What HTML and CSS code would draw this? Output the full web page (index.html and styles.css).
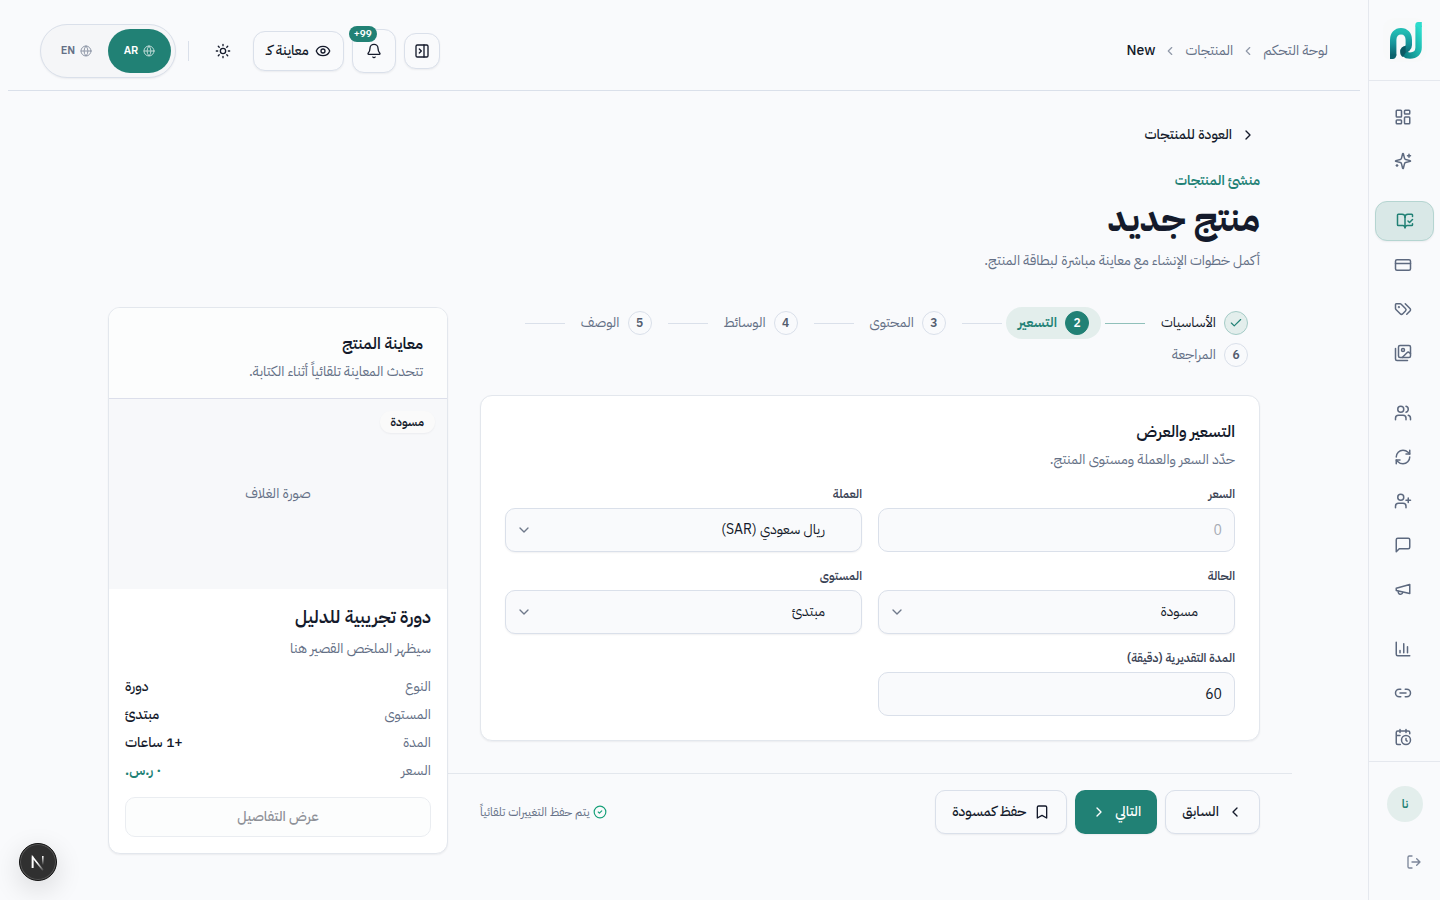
FILE: index.html
```html
<!DOCTYPE html>
<html lang="ar" dir="rtl">
<head>
<meta charset="utf-8">
<meta name="viewport" content="width=device-width, initial-scale=1">
<title>منتج جديد</title>
<link rel="stylesheet" href="styles.css">
</head>
<body>
<div class="app">
  <aside class="sidebar">
    <a class="brand" href="#" aria-label="الرئيسية">
      <svg class="brand-logo" viewBox="0 0 44 44" fill="none" stroke-width="6.400" aria-hidden="true">
        <defs>
          <linearGradient id="lg1" x1="0" y1="0" x2="0" y2="1"><stop offset="0" stop-color="#22bdb4"/><stop offset=".5" stop-color="#17949a"/><stop offset="1" stop-color="#0b626c"/></linearGradient>
          <linearGradient id="lg2" x1="0" y1="1" x2="1" y2="0"><stop offset="0" stop-color="#0a7a80"/><stop offset=".45" stop-color="#18aaa4"/><stop offset="1" stop-color="#2edccd"/></linearGradient>
        </defs>
        <rect width="44" height="44" rx="12" fill="#f8f9fa"/>
        <path d="M20.500 31.500C20.500 35.800 23 37.600 27 37.600C32.500 37.600 35.600 34.500 35.600 29.500V7.500" stroke="url(#lg2)"/>
        <path d="M32.400 8.500V6.500C32.400 5 33.500 4 35 4H38.800V9Z" fill="#2edccd"/>
        <path d="M10.200 37.500V22C10.200 16.500 13.500 13.200 18 13.200S25.800 16.500 25.800 22V27C25.800 30 23.500 31.600 20.500 31.600" stroke="url(#lg1)"/>
        <path d="M7 36.500H13.400C13.400 39 12 41 9.500 41H7Z" fill="#0b626c"/>
        <path d="M17.200 34C17.200 30 19.500 28.300 22.600 28V34.800L20 39C18 38 17.200 36.500 17.200 34Z" fill="#0a5964"/>
      </svg>
    </a>
    <nav class="nav" aria-label="القائمة الرئيسية">
      <div class="nav-group">
        <a class="nav-item" href="#" aria-label="لوحة التحكم"><svg class="icon" viewBox="0 0 24 24"><rect width="7" height="9" x="3" y="3" rx="1"/><rect width="7" height="5" x="14" y="3" rx="1"/><rect width="7" height="9" x="14" y="12" rx="1"/><rect width="7" height="5" x="3" y="16" rx="1"/></svg></a>
        <a class="nav-item" href="#" aria-label="المساعد"><svg class="icon" viewBox="0 0 24 24"><path d="M9.937 15.500A2 2 0 0 0 8.500 14.063l-6.135-1.582a.5.5 0 0 1 0-.962L8.500 9.936A2 2 0 0 0 9.937 8.500l1.582-6.135a.5.5 0 0 1 .963 0L14.063 8.500A2 2 0 0 0 15.500 9.937l6.135 1.581a.5.5 0 0 1 0 .964L15.500 14.063a2 2 0 0 0-1.437 1.437l-1.582 6.135a.5.5 0 0 1-.963 0z"/><path d="M20 3v4M22 5h-4M4 17v2M5 18H3"/></svg></a>
      </div>
      <div class="nav-group">
        <a class="nav-item nav-item-active" href="#" aria-label="المنتجات" aria-current="page"><svg class="icon" viewBox="0 0 24 24"><path d="M12 21V7"/><path d="m16 12 2 2 4-4"/><path d="M22 6V4a1 1 0 0 0-1-1h-5a4 4 0 0 0-4 4 4 4 0 0 0-4-4H3a1 1 0 0 0-1 1v13a1 1 0 0 0 1 1h6a3 3 0 0 1 3 3 3 3 0 0 1 3-3h6a1 1 0 0 0 1-1v-1.300"/></svg></a>
        <a class="nav-item" href="#" aria-label="المدفوعات"><svg class="icon" viewBox="0 0 24 24"><rect width="20" height="14" x="2" y="5" rx="2"/><path d="M2 10h20"/></svg></a>
        <a class="nav-item" href="#" aria-label="العروض"><svg class="icon" viewBox="0 0 24 24"><path d="m15 5 6.300 6.300a2.400 2.400 0 0 1 0 3.400L17 19"/><path d="M9.586 5.586A2 2 0 0 0 8.172 5H3a1 1 0 0 0-1 1v5.172a2 2 0 0 0 .586 1.414L8.290 18.290a2.426 2.426 0 0 0 3.420 0l3.580-3.580a2.426 2.426 0 0 0 0-3.420z"/><circle cx="6.500" cy="9.500" r=".5" fill="currentColor"/></svg></a>
        <a class="nav-item" href="#" aria-label="الوسائط"><svg class="icon" viewBox="0 0 24 24"><path d="M18 22H4a2 2 0 0 1-2-2V6"/><path d="m22 13-1.296-1.296a2.410 2.410 0 0 0-3.408 0L11 18"/><circle cx="12" cy="8" r="2"/><rect width="16" height="16" x="6" y="2" rx="2"/></svg></a>
      </div>
      <div class="nav-group">
        <a class="nav-item" href="#" aria-label="العملاء"><svg class="icon" viewBox="0 0 24 24"><path d="M16 21v-2a4 4 0 0 0-4-4H6a4 4 0 0 0-4 4v2"/><circle cx="9" cy="7" r="4"/><path d="M22 21v-2a4 4 0 0 0-3-3.870M16 3.130a4 4 0 0 1 0 7.750"/></svg></a>
        <a class="nav-item" href="#" aria-label="الاشتراكات"><svg class="icon" viewBox="0 0 24 24"><path d="M3 12a9 9 0 0 1 9-9 9.750 9.750 0 0 1 6.740 2.740L21 8"/><path d="M21 3v5h-5"/><path d="M21 12a9 9 0 0 1-9 9 9.750 9.750 0 0 1-6.740-2.740L3 16"/><path d="M8 16H3v5"/></svg></a>
        <a class="nav-item" href="#" aria-label="دعوة"><svg class="icon" viewBox="0 0 24 24"><path d="M16 21v-2a4 4 0 0 0-4-4H6a4 4 0 0 0-4 4v2"/><circle cx="9" cy="7" r="4"/><path d="M19 8v6M22 11h-6"/></svg></a>
        <a class="nav-item" href="#" aria-label="الرسائل"><svg class="icon" viewBox="0 0 24 24"><path d="M21 15a2 2 0 0 1-2 2H7l-4 4V5a2 2 0 0 1 2-2h14a2 2 0 0 1 2 2z"/></svg></a>
        <a class="nav-item" href="#" aria-label="التسويق"><svg class="icon" viewBox="0 0 24 24"><path d="m3 11 18-5v12L3 14v-3z"/><path d="M11.600 16.800a3 3 0 1 1-5.800-1.600"/></svg></a>
      </div>
      <div class="nav-group">
        <a class="nav-item" href="#" aria-label="التحليلات"><svg class="icon" viewBox="0 0 24 24"><path d="M3 3v16a2 2 0 0 0 2 2h16M18 17V9M13 17V5M8 17v-3"/></svg></a>
        <a class="nav-item" href="#" aria-label="الروابط"><svg class="icon" viewBox="0 0 24 24"><path d="M9 17H7A5 5 0 0 1 7 7h2M15 7h2a5 5 0 1 1 0 10h-2M8 12h8"/></svg></a>
        <a class="nav-item" href="#" aria-label="المواعيد"><svg class="icon" viewBox="0 0 24 24"><path d="M21 7.500V6a2 2 0 0 0-2-2H5a2 2 0 0 0-2 2v14a2 2 0 0 0 2 2h3.500M16 2v4M8 2v4M3 10h5M17.500 17.500 16 16.300V14"/><circle cx="16" cy="16" r="6"/></svg></a>
      </div>
    </nav>
    <div class="account">
      <span class="avatar">نا</span>
      <button class="logout" type="button" aria-label="تسجيل الخروج"><svg class="icon" viewBox="0 0 24 24"><path d="M9 21H5a2 2 0 0 1-2-2V5a2 2 0 0 1 2-2h4M16 17l5-5-5-5M21 12H9"/></svg></button>
    </div>
  </aside>

  <div class="page">
    <header class="topbar">
      <nav class="crumbs" aria-label="مسار التنقل">
        <a href="#">لوحة التحكم</a>
        <svg class="icon crumb-sep" viewBox="0 0 24 24"><path d="m15 18-6-6 6-6"/></svg>
        <a href="#">المنتجات</a>
        <svg class="icon crumb-sep" viewBox="0 0 24 24"><path d="m15 18-6-6 6-6"/></svg>
        <span class="crumb-current" aria-current="page">New</span>
      </nav>
      <div class="tools">
        <button class="tool tool-small" type="button" aria-label="طي اللوحة"><svg class="icon" viewBox="0 0 24 24"><rect width="18" height="18" x="3" y="3" rx="2"/><path d="M15 3v18M8 9l3 3-3 3"/></svg></button>
        <button class="tool" type="button" aria-label="الإشعارات"><svg class="icon" viewBox="0 0 24 24"><path d="M10.268 21a2 2 0 0 0 3.464 0"/><path d="M3.262 15.326A1 1 0 0 0 4 17h16a1 1 0 0 0 .740-1.673C19.410 13.956 18 12.499 18 8A6 6 0 0 0 6 8c0 4.499-1.411 5.956-2.738 7.326"/></svg><span class="count" dir="ltr">+99</span></button>
        <button class="tool tool-preview" type="button"><svg class="icon" viewBox="0 0 24 24"><path d="M2.062 12.348a1 1 0 0 1 0-.696 10.750 10.750 0 0 1 19.876 0 1 1 0 0 1 0 .696 10.750 10.750 0 0 1-19.876 0"/><circle cx="12" cy="12" r="3"/></svg><span>معاينة كـ</span></button>
        <button class="tool tool-plain" type="button" aria-label="تبديل المظهر"><svg class="icon" viewBox="0 0 24 24"><circle cx="12" cy="12" r="4"/><path d="M12 2v2M12 20v2M4.930 4.930l1.410 1.410M17.660 17.660l1.410 1.410M2 12h2M20 12h2M6.340 17.660l-1.410 1.410M19.070 4.930l-1.410 1.410"/></svg></button>
        <span class="divider"></span>
        <div class="langs" role="group" aria-label="اللغة">
          <button class="lang lang-active" type="button" aria-pressed="true"><svg class="icon" viewBox="0 0 24 24"><circle cx="12" cy="12" r="10"/><path d="M12 2a14.500 14.500 0 0 0 0 20 14.500 14.500 0 0 0 0-20M2 12h20"/></svg>AR</button>
          <button class="lang" type="button" aria-pressed="false"><svg class="icon" viewBox="0 0 24 24"><circle cx="12" cy="12" r="10"/><path d="M12 2a14.500 14.500 0 0 0 0 20 14.500 14.500 0 0 0 0-20M2 12h20"/></svg>EN</button>
        </div>
      </div>
    </header>

    <main class="content">
      <a class="back" href="#"><svg class="icon" viewBox="0 0 24 24"><path d="m9 18 6-6-6-6"/></svg>العودة للمنتجات</a>
      <div class="intro">
        <p class="eyebrow">منشئ المنتجات</p>
        <h1 class="title">منتج جديد</h1>
        <p class="lead">أكمل خطوات الإنشاء مع معاينة مباشرة لبطاقة المنتج.</p>
      </div>

      <div class="columns">
        <form class="builder" onsubmit="return false">
          <ol class="steps">
            <li class="step step-done"><span class="dot"><svg class="icon" viewBox="0 0 24 24"><path d="M20 6 9 17l-5-5"/></svg></span><span>الأساسيات</span></li>
            <li class="step step-current" aria-current="step"><span class="dot">2</span><span>التسعير</span></li>
            <li class="step"><span class="dot">3</span><span>المحتوى</span></li>
            <li class="step"><span class="dot">4</span><span>الوسائط</span></li>
            <li class="step"><span class="dot">5</span><span>الوصف</span></li>
            <li class="step"><span class="dot">6</span><span>المراجعة</span></li>
          </ol>

          <section class="card form-card">
            <h2 class="card-title">التسعير والعرض</h2>
            <p class="card-text">حدّد السعر والعملة ومستوى المنتج.</p>
            <div class="fields">
              <div class="field"><label for="price">السعر</label><input id="price" type="number" placeholder="0"></div>
              <div class="field"><label for="currency">العملة</label><div class="select"><select id="currency"><option>ريال سعودي (SAR)</option></select><svg class="icon" viewBox="0 0 24 24"><path d="m6 9 6 6 6-6"/></svg></div></div>
              <div class="field"><label for="status">الحالة</label><div class="select"><select id="status"><option>مسودة</option></select><svg class="icon" viewBox="0 0 24 24"><path d="m6 9 6 6 6-6"/></svg></div></div>
              <div class="field"><label for="level">المستوى</label><div class="select"><select id="level"><option>مبتدئ</option></select><svg class="icon" viewBox="0 0 24 24"><path d="m6 9 6 6 6-6"/></svg></div></div>
              <div class="field"><label for="duration">المدة التقديرية (دقيقة)</label><input id="duration" type="number" value="60"></div>
            </div>
          </section>

          <div class="actions">
            <div class="buttons">
              <button class="btn" type="button"><svg class="icon" viewBox="0 0 24 24"><path d="m15 18-6-6 6-6"/></svg>السابق</button>
              <button class="btn btn-primary" type="submit">التالي<svg class="icon" viewBox="0 0 24 24"><path d="m9 18 6-6-6-6"/></svg></button>
              <button class="btn" type="button"><svg class="icon" viewBox="0 0 24 24"><path d="m19 21-7-4-7 4V5a2 2 0 0 1 2-2h10a2 2 0 0 1 2 2v16z"/></svg>حفظ كمسودة</button>
            </div>
            <p class="autosave"><svg class="icon" viewBox="0 0 24 24"><circle cx="12" cy="12" r="10"/><path d="m9 12 2 2 4-4"/></svg>يتم حفظ التغييرات تلقائياً</p>
          </div>
        </form>

        <aside class="card preview">
          <div class="preview-head">
            <h2 class="card-title">معاينة المنتج</h2>
            <p class="card-text">تتحدث المعاينة تلقائياً أثناء الكتابة.</p>
          </div>
          <div class="cover"><span class="badge">مسودة</span><span>صورة الغلاف</span></div>
          <div class="preview-body">
            <h3 class="product">دورة تجريبية للدليل</h3>
            <p class="card-text">سيظهر الملخص القصير هنا</p>
            <dl class="facts">
              <div><dt>النوع</dt><dd>دورة</dd></div>
              <div><dt>المستوى</dt><dd>مبتدئ</dd></div>
              <div><dt>المدة</dt><dd>+1 ساعات</dd></div>
              <div><dt>السعر</dt><dd class="price">٠ ر.س.</dd></div>
            </dl>
            <button class="details" type="button" disabled>عرض التفاصيل</button>
          </div>
        </aside>
      </div>
    </main>
  </div>
</div>
<button class="devtools" type="button" aria-label="أدوات التطوير">
  <svg viewBox="0 0 36 36" fill="none" aria-hidden="true">
    <defs>
      <linearGradient id="nx1" gradientUnits="userSpaceOnUse" x1="18" y1="18" x2="24" y2="25"><stop stop-color="#fff"/><stop offset="1" stop-color="#fff" stop-opacity=".15"/></linearGradient>
      <linearGradient id="nx2" gradientUnits="userSpaceOnUse" x1="23" y1="12" x2="23" y2="21"><stop stop-color="#fff"/><stop offset="1" stop-color="#fff" stop-opacity="0"/></linearGradient>
    </defs>
    <path d="M12.600 24V13L23 26.200" stroke="url(#nx1)" stroke-width="1.600"/>
    <path d="M12.600 24V12.500" stroke="#fff" stroke-width="1.600"/>
    <path d="M22.800 12V21" stroke="url(#nx2)" stroke-width="1.600"/>
  </svg>
</button>
</body>
</html>
```
FILE: styles.css
```css
:root {
  --bg: #f9fafc;
  --text: #141a2b;
  --muted: #647086;
  --line: #dae0ea;
  --primary: #218175;
  --tint: #e3eeec;
  --shadow: 0 1px 2px rgba(16, 24, 40, .06);
}
* { box-sizing: border-box; }
body {
  margin: 0;
  background: var(--bg);
  color: var(--text);
  font: 14px/20px "IBM Plex Sans Arabic", "Noto Sans Arabic", "Noto Sans", sans-serif;
}
h1, h2, h3, p, dl, dd, ol { margin: 0; padding: 0; }
a { color: inherit; text-decoration: none; }
button, input, select { font: inherit; color: inherit; }
button { cursor: pointer; }
.icon {
  width: 16px;
  height: 16px;
  flex: none;
  fill: none;
  stroke: currentColor;
  stroke-width: 2;
  stroke-linecap: round;
  stroke-linejoin: round;
}

.app { display: flex; min-height: 100vh; }
.sidebar {
  position: sticky;
  top: 0;
  display: flex;
  flex-direction: column;
  flex: none;
  width: 72px;
  height: 100vh;
  border-left: 1px solid #e5e8ee;
}
.brand {
  display: flex;
  justify-content: center;
  padding: 18px 0;
  border-bottom: 1px solid #e5e8ee;
}
.brand-logo { width: 44px; height: 44px; }
.nav {
  display: flex;
  flex: 1;
  flex-direction: column;
  gap: 20px;
  min-height: 0;
  padding: 16px 6px;
  overflow: hidden;
}
.nav-group { display: flex; flex-direction: column; gap: 4px; }
.nav-item {
  display: flex;
  align-items: center;
  justify-content: center;
  height: 40px;
  padding-right: 3px;
  color: #5d697f;
}
.nav-item .icon { width: 18px; height: 18px; }
.nav-item-active {
  padding: 0;
  border: 1px solid #b5d5d1;
  border-radius: 12px;
  background: #d9e8e7;
  color: var(--primary);
  box-shadow: var(--shadow);
}
.account {
  display: flex;
  flex-direction: column;
  gap: 24px;
  padding: 24px 17px 22px;
  border-top: 1px solid #e5e8ee;
}
.avatar {
  display: grid;
  place-items: center;
  width: 36px;
  height: 36px;
  border-radius: 50%;
  background: var(--tint);
  color: var(--primary);
  font-size: 12px;
  font-weight: 600;
}
.logout {
  display: flex;
  padding: 8px 1px;
  border: 0;
  background: none;
  color: #7d879a;
}

.page { flex: 1; min-width: 0; }
.topbar {
  display: flex;
  align-items: center;
  justify-content: space-between;
  margin: 0 8px;
  padding: 24px 32px 12px;
  border-bottom: 1px solid var(--line);
}
.crumbs { display: flex; align-items: center; gap: 8px; color: var(--muted); }
.crumb-sep { width: 14px; height: 14px; opacity: .7; }
.crumb-current { color: var(--text); font-weight: 500; }
.tools { display: flex; align-items: center; gap: 8px; }
.tool {
  position: relative;
  display: flex;
  align-items: center;
  justify-content: center;
  gap: 6px;
  width: 44px;
  height: 44px;
  padding: 0;
  border: 1px solid var(--line);
  border-radius: 12px;
  background: var(--bg);
  box-shadow: var(--shadow);
}
.tool-small { width: 36px; height: 36px; }
.tool-preview { width: auto; height: 40px; padding: 0 12px; font-weight: 500; }
.tool-plain { border: 0; background: none; box-shadow: none; }
.count {
  position: absolute;
  top: -4px;
  left: -4px;
  padding: 0 5px;
  border-radius: 8px;
  background: var(--primary);
  color: #fff;
  font-size: 10px;
  font-weight: 600;
  line-height: 16px;
}
.divider { width: 1px; height: 20px; margin: 0 4px; background: var(--line); }
.langs {
  display: flex;
  padding: 4px;
  border: 1px solid var(--line);
  border-radius: 27px;
  background: #f5f6f8;
  box-shadow: var(--shadow);
}
.lang {
  display: flex;
  align-items: center;
  justify-content: center;
  gap: 5px;
  width: 63px;
  height: 44px;
  padding: 0;
  border: 0;
  border-radius: 22px;
  background: none;
  color: var(--muted);
  font-size: 11px;
  font-weight: 600;
}
.lang .icon { width: 12px; height: 12px; opacity: .7; }
.lang-active { background: var(--primary); color: #fff; }

.content { max-width: 1216px; margin: 0 auto; padding: 24px 32px 46px; }
.back {
  display: inline-flex;
  align-items: center;
  gap: 8px;
  padding: 10px 4px;
  font-weight: 500;
}
.intro { padding: 16px 0 36px; }
.eyebrow { color: var(--primary); font-weight: 600; }
.title { padding: 4px 0 8px; font-size: 36px; line-height: 48px; font-weight: 700; }
.lead, .card-text { color: var(--muted); }
.columns {
  display: grid;
  grid-template-columns: minmax(0, 1fr) 340px;
  gap: 32px;
  align-items: start;
}
.card {
  border: 1px solid #e3e7ed;
  border-radius: 12px;
  background: #fff;
  box-shadow: var(--shadow);
}
.card-title { font-size: 16px; line-height: 24px; font-weight: 600; }

.steps { display: flex; flex-wrap: wrap; list-style: none; }
.step {
  display: flex;
  align-items: center;
  gap: 8px;
  position: relative;
  margin-left: 48px;
  padding: 4px 12px;
  border-radius: 16px;
  color: var(--muted);
}
.step:not(:last-child)::after {
  content: "";
  position: absolute;
  right: calc(100% + 4px);
  top: 50%;
  width: 40px;
  height: 1px;
  background: var(--line);
}
.step.step-done::after { background: #90c0ba; }
.step:last-child { margin-left: 0; }
.dot {
  display: grid;
  place-items: center;
  width: 24px;
  height: 24px;
  border: 1px solid var(--line);
  border-radius: 50%;
  color: #535c6e;
  font-size: 12px;
  font-weight: 600;
  line-height: 16px;
}
.dot .icon { width: 14px; height: 14px; }
.step-done { color: var(--text); }
.step-done .dot { border-color: #a5ccc7; background: var(--tint); color: var(--primary); }
.step-current { background: var(--tint); color: var(--primary); font-weight: 600; }
.step-current .dot { border-color: var(--primary); background: var(--primary); color: #fff; }

.form-card { margin-top: 24px; padding: 24px; }
.form-card .card-text { padding-top: 6px; }
.fields {
  display: grid;
  grid-template-columns: repeat(2, minmax(0, 1fr));
  gap: 16px;
  margin-top: 16px;
}
.field { display: grid; gap: 6px; }
.field label { color: #3a4254; font-size: 12px; line-height: 16px; font-weight: 600; }
.field input, .field select {
  width: 100%;
  height: 44px;
  padding: 0 12px;
  border: 1px solid var(--line);
  border-radius: 10px;
  background: var(--bg);
  text-align: right;
  appearance: none;
}
.field input::-webkit-inner-spin-button { appearance: none; }
.field input::placeholder { color: #a7acb5; }
.field select { padding: 0 36px; box-shadow: var(--shadow); }
.select { position: relative; }
.select .icon {
  position: absolute;
  left: 11px;
  top: 14px;
  color: #6f798b;
  pointer-events: none;
}

.actions {
  display: flex;
  align-items: center;
  justify-content: space-between;
  margin: 32px -32px 0;
  padding: 16px 32px;
  border-top: 1px solid #e3e7ed;
}
.buttons { display: flex; gap: 8px; }
.btn {
  display: flex;
  align-items: center;
  gap: 8px;
  height: 44px;
  padding: 0 16px;
  border: 1px solid var(--line);
  border-radius: 10px;
  background: var(--bg);
  box-shadow: var(--shadow);
  font-weight: 500;
}
.btn-primary { border: 0; background: var(--primary); color: #fff; }
.autosave {
  display: flex;
  align-items: center;
  gap: 4px;
  color: var(--muted);
  font-size: 12px;
  line-height: 16px;
}
.autosave .icon { width: 14px; height: 14px; color: #16a078; }

.preview { overflow: hidden; }
.preview-head {
  padding: 24px 24px 16px;
  border-bottom: 1px solid #dcdfeb;
  background: #fcfdfd;
}
.preview-head .card-text { padding-top: 6px; }
.cover {
  position: relative;
  display: grid;
  place-items: center;
  aspect-ratio: 16 / 9;
  background: #f7f8fa;
  color: var(--muted);
}
.badge {
  position: absolute;
  top: 12px;
  right: 12px;
  padding: 3px 11px;
  border-radius: 12px;
  background: #fafafa;
  box-shadow: 0 1px 2px rgba(16, 24, 40, .05);
  color: var(--text);
  font-size: 12px;
  line-height: 16px;
  font-weight: 600;
}
.preview-body { padding: 16px; }
.product { padding-bottom: 10px; font-size: 18px; line-height: 24px; font-weight: 600; }
.facts { display: grid; gap: 8px; padding: 18px 0 16px; }
.facts div { display: flex; justify-content: space-between; }
.facts dt { color: var(--muted); }
.facts dd { font-weight: 500; }
.facts .price { color: var(--primary); font-weight: 600; }
.details {
  width: 100%;
  height: 40px;
  border: 1px solid #eaedf1;
  border-radius: 10px;
  background: #fcfdfd;
  color: #8d9097;
  font-weight: 500;
}

.devtools {
  position: fixed;
  left: 19px;
  bottom: 19px;
  width: 38px;
  height: 38px;
  padding: 0;
  border: 1px solid #111;
  border-radius: 50%;
  background: #303030;
  box-shadow: inset 0 0 0 1px #555, 0 8px 28px rgba(0, 0, 0, .14);
}
.devtools svg { display: block; width: 36px; height: 36px; }
```
